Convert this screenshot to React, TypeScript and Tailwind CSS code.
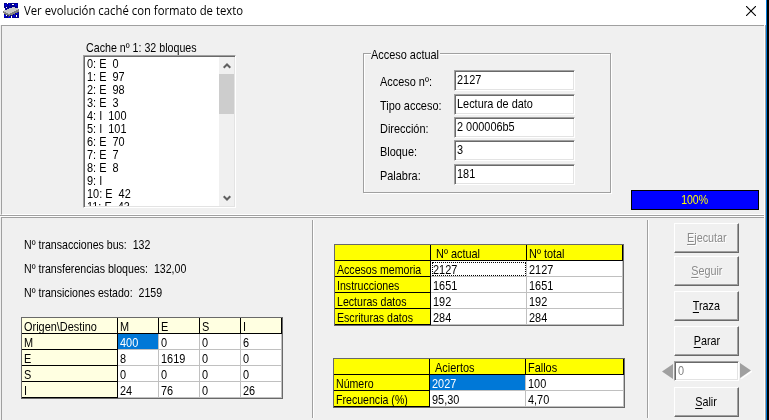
import type { ReactNode } from "react";
import clsx from "clsx";

const sunken =
  "border border-t-[#a0a0a0] border-l-[#a0a0a0] border-r-white border-b-white bg-white shadow-[inset_1px_1px_0_#696969,inset_-1px_-1px_0_#e3e3e3]";

const tight = "origin-left scale-x-[.815]";

function T({ children, className = "origin-left scale-x-[.84]" }: { children: ReactNode; className?: string }) {
  return <span className={clsx("inline-block whitespace-pre", className)}>{children}</span>;
}

function TitleBar() {
  return (
    <header className="flex h-[25px] shrink-0 items-start bg-white">
      <svg className="ml-[3px] mt-[3px] h-4 w-4 shrink-0" viewBox="0 0 16 16" shapeRendering="crispEdges">
        <path d="M1 0h14v6h-1v2h2v7H1V9h1V5H1z" fill="#000090" />
        <path d="M2 1h2v2H2zM6 0h1v3H6zM12 1h2v2h-2zM1 12h2v2H1zM5 13h2v2H5zM10 12h2v2h-2zM13 9h2v2h-2z" fill="#0000e0" />
        <path d="M4 0h1v1H4zM9 1h2v1H9zM3 4h1v1H3zM14 7h2v1h-2zM3 12h1v1H3zM8 13h1v2H8zM13 12h1v2h-1z" fill="#fff" />
        <path d="M0 8L10 4l6 2v3L6 13l-6-3z" fill="#808080" />
        <path d="M0 8L10 4l6 2L6 11z" fill="#c8c8c8" />
        <path d="M2 11h1v1H2zM5 12h1v2H5zM8 12h1v1H8zM11 11h1v1h-1zM14 9h1v1h-1z" fill="#404040" />
      </svg>
      <h1 className="ml-[5px] mt-[3px] origin-left scale-x-[.944] whitespace-nowrap font-['Open_Sans','Noto_Sans',sans-serif] text-[12px] leading-4">
        Ver evolución caché con formato de texto
      </h1>
      <svg className="ml-auto mr-[10px] mt-[6px] h-[10px] w-[10px]" viewBox="0 0 10 10">
        <path d="M0 0L10 10M10 0L0 10" stroke="#000" strokeWidth="1.1" />
      </svg>
    </header>
  );
}

const blocks = [
  "0: E  0", "1: E  97", "2: E  98", "3: E  3", "4: I  100", "5: I  101",
  "6: E  70", "7: E  7", "8: E  8", "9: I", "10: E  42", "11: E  43",
];

function CacheList() {
  return (
    <section className="ml-[81px] mt-[14px] w-[153px]">
      <div className="h-[15px] pl-[3px] leading-[15px]"><T className="origin-left scale-x-[.82]">Cache nº 1: 32 bloques</T></div>
      <div className={clsx("flex h-[153px] p-px", sunken)}>
        <ul className="flex-1 overflow-hidden pl-[2px]">
          {blocks.map((b) => (
            <li key={b} className="flex h-[13px] leading-[13px]"><T>{b}</T></li>
          ))}
        </ul>
        <div className="flex w-[15px] flex-col items-center bg-[#f0f0f0]">
          <svg className="mt-[6px] h-[6px] w-[8px]" viewBox="0 0 8 6"><path d="M.7 4.8L4 1.5l3.3 3.3" fill="none" stroke="#606060" strokeWidth="2" /></svg>
          <div className="mt-[5px] h-10 w-full bg-[#cdcdcd]" />
          <svg className="mb-[5px] mt-auto h-[6px] w-[8px]" viewBox="0 0 8 6"><path d="M.7 1.2L4 4.5l3.3-3.3" fill="none" stroke="#606060" strokeWidth="2" /></svg>
        </div>
      </div>
    </section>
  );
}

const fields = [
  { label: "Acceso nº:", value: "2127", gap: "mt-[8px]" },
  { label: "Tipo acceso:", value: "Lectura de dato", gap: "mt-[3px]" },
  { label: "Dirección:", value: "2 000006b5", gap: "mt-[2px]" },
  { label: "Bloque:", value: "3", gap: "mt-[2px]" },
  { label: "Palabra:", value: "181", gap: "mt-[3px]" },
];

function CurrentAccess() {
  return (
    <section className="ml-[127px] mt-[27px] h-[140px] w-[248px] border border-[#a0a0a0] shadow-[1px_1px_0_#fff,inset_1px_1px_0_#fff]">
      <h2 className="-mt-[6px] ml-[7px] h-[14px] w-[69px] bg-[#f0f0f0] leading-[14px]"><T>Acceso actual</T></h2>
      {fields.map((f) => (
        <div key={f.label} className={clsx("flex h-[21px]", f.gap)}>
          <div className="w-[90px] pl-[16px] pt-[4px] leading-[16px]"><T>{f.label}</T></div>
          <div className={clsx("h-[21px] w-[121px] pl-[2px] leading-[17px]", sunken)}><T>{f.value}</T></div>
        </div>
      ))}
    </section>
  );
}

type GridProps = {
  rows: string[][];
  widths: string[];
  fixed: string;
  selected?: boolean;
  focused?: boolean;
  indent?: boolean;
};

function Grid({ rows, widths, fixed, selected, focused, indent }: GridProps) {
  return (
    <div className="w-fit border border-[#696969]">
      {rows.map((row, r) => (
        <div key={r} className="flex">
          {row.map((cell, c) => {
            const active = r === 1 && c === 1;
            return (
              <div
                key={c}
                className={clsx(
                  "h-4 border-b border-r leading-[17px]",
                  indent && r === 0 && c === 1 ? "pl-[5px]" : "pl-[2px]",
                  widths[c],
                  r === 0 || c === 0 ? clsx("border-black", fixed) : "border-[#c0c0c0]",
                  r > 0 && c > 0 && !(active && selected) && "bg-white",
                  active && selected && "bg-[#0078d7] text-white",
                  active && focused && "outline-1 -outline-offset-2 outline-dotted outline-black",
                )}
              >
                <T className={c === 0 && indent ? tight : undefined}>{cell}</T>
              </div>
            );
          })}
        </div>
      ))}
    </div>
  );
}

function Divider() {
  return <div className="mt-[2px] h-[198px] w-[2px] shrink-0 border-l border-r border-l-[#a0a0a0] border-r-white" />;
}

function Button({ text, disabled, className }: { text: string; disabled?: boolean; className: string }) {
  return (
    <button
      className={clsx(
        "block h-[30px] w-[65px] border border-b-[#696969] border-l-white border-r-[#696969] border-t-white shadow-[inset_-1px_-1px_0_#a0a0a0] leading-[28px]",
        disabled && "text-[#8a8a8a] [text-shadow:1px_1px_0_#fff]",
        className,
      )}
    >
      <T className="scale-x-[.83]"><span className="underline underline-offset-2">{text[0]}</span>{text.slice(1)}</T>
    </button>
  );
}

const states = [
  ["Origen\\Destino", "M", "E", "S", "I"],
  ["M", "400", "0", "0", "6"],
  ["E", "8", "1619", "0", "0"],
  ["S", "0", "0", "0", "0"],
  ["I", "24", "76", "0", "26"],
];
const accesses = [
  ["", "Nº actual", "Nº total"],
  ["Accesos memoria", "2127", "2127"],
  ["Instrucciones", "1651", "1651"],
  ["Lecturas datos", "192", "192"],
  ["Escrituras datos", "284", "284"],
];
const hits = [
  ["", "Aciertos", "Fallos"],
  ["Número", "2027", "100"],
  ["Frecuencia (%)", "95,30", "4,70"],
];

export default function App() {
  return (
    <div className="flex h-[420px] w-[769px] overflow-hidden bg-[#f0f0f0] font-['Liberation_Sans',Arial,sans-serif] text-[13px] text-black">
      <div className="flex w-[766px] flex-col">
        <TitleBar />
        <div className="flex min-h-0 flex-1">
          <div className="flex w-[764px] flex-col">
            <main className="ml-px flex h-[190px] shrink-0 border-b border-l border-t border-b-white border-l-[#a0a0a0] border-t-[#a0a0a0]">
              <CacheList />
              <CurrentAccess />
              <div className="ml-[20px] mt-[164px] h-5 w-32 border border-black bg-[#00f] text-center leading-[18px] text-[#ff0]">
                <T className="scale-x-[.81]">100%</T>
              </div>
            </main>
            <div className="h-[2px] shrink-0 border-b border-t border-b-white border-t-[#a0a0a0]" />
            <div className="ml-px flex min-h-0 flex-1 border-l border-t border-[#a0a0a0]">
              <section className="w-[310px] pl-[19px]">
                <div className="mt-[15px] h-[84px] pl-[3px] leading-6">
                  <div className="h-6"><T className={tight}>Nº transacciones bus:  132</T></div>
                  <div className="h-6"><T className={tight}>Nº transferencias bloques:  132,00</T></div>
                  <div className="h-6"><T className={tight}>Nº transiciones estado:  2159</T></div>
                </div>
                <Grid rows={states} widths={["w-[96px]", "w-[41px]", "w-[41px]", "w-[41px]", "w-[41px]"]} fixed="bg-[#ffffe1]" selected />
              </section>
              <Divider />
              <section className="w-[333px] pl-[19px] pt-[26px]">
                <div className="pl-px">
                  <Grid rows={accesses} widths={["w-[96px]", "w-[96px]", "w-[96px]"]} fixed="bg-[#ff0]" focused indent />
                </div>
                <div className="mt-[32px]">
                  <Grid rows={hits} widths={["w-[96px]", "w-[96px]", "w-[98px]"]} fixed="bg-[#ff0]" selected indent />
                </div>
              </section>
              <Divider />
              <aside className="flex flex-1 flex-col pl-[13px]">
                <Button text="Ejecutar" disabled className="ml-[12px] mt-[5px]" />
                <Button text="Seguir" disabled className="ml-[12px] mt-[3px]" />
                <Button text="Traza" className="ml-[12px] mt-[5px]" />
                <Button text="Parar" className="ml-[12px] mt-[5px]" />
                <div className="mt-[5px] flex h-5 items-center">
                  <svg className="mr-px h-[15px] w-[11px]" viewBox="0 0 11 15"><path d="M0 7.5L11 0v15z" fill="#a0a0a0" /></svg>
                  <div className={clsx("h-5 w-[65px] pl-[3px] leading-[17px] text-[#808080]", sunken)}><T>0</T></div>
                  <svg className="ml-px h-[16px] w-[12px]" viewBox="0 0 12 16"><path d="M1 16L12 8.5 11 7.5z" fill="#fff" stroke="#fff" /><path d="M0 0l11 7.5L0 15z" fill="#a0a0a0" /></svg>
                </div>
                <Button text="Salir" className="ml-[12px] mt-[6px]" />
              </aside>
            </div>
          </div>
          <div className="w-[2px] border-l border-r border-l-white border-r-[#a0a0a0]" />
        </div>
      </div>
      <div className="w-px bg-[#0078d7]" />
      <div className="w-[2px] bg-black" />
    </div>
  );
}
